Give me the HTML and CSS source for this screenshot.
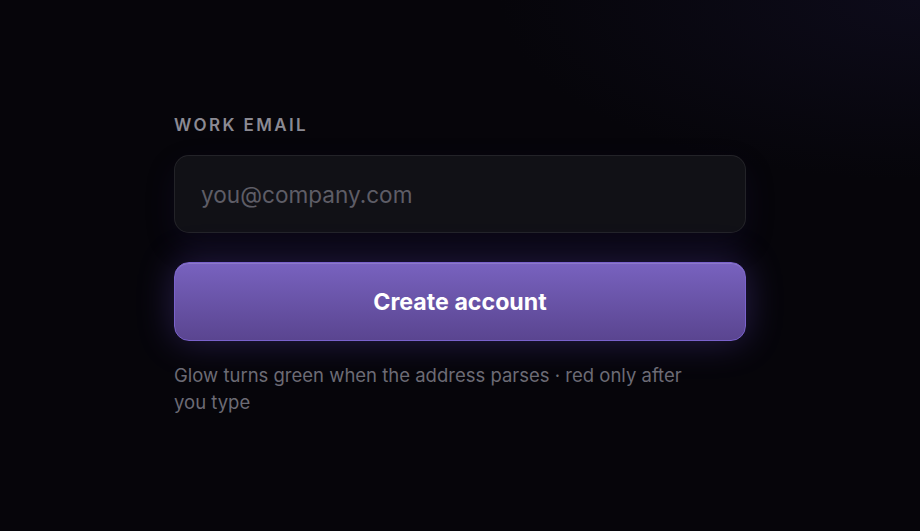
FILE: index.html
```html
<!DOCTYPE html>
<html lang="en">
<head>
    <meta charset="UTF-8">
    <meta name="viewport" content="width=device-width, initial-scale=1.0">
    <title>Sign up</title>
    <link rel="stylesheet" href="styles.css">
</head>
<body>
    <form class="signup">
        <label class="field-label" for="email">Work email</label>
        <input class="email-input" id="email" type="email" placeholder="you@company.com">
        <button class="submit" type="submit">Create account</button>
        <p class="hint">Glow turns green when the address parses · red only after you type</p>
    </form>
</body>
</html>
```

FILE: styles.css
```css
* {
    margin: 0;
    padding: 0;
    box-sizing: border-box;
    font-family: Inter, "Noto Sans", sans-serif;
}

body {
    min-height: 100vh;
    display: flex;
    justify-content: center;
    align-items: center;
    background: radial-gradient(ellipse 420px 180px at 100% 0%, #0d0b1a, transparent), #06050a;
}

.signup {
    width: 572px;
    display: flex;
    flex-direction: column;
}

.field-label {
    font-size: 17px;
    font-weight: 600;
    letter-spacing: 2.4px;
    text-transform: uppercase;
    color: #8b8a93;
    line-height: 20px;
    margin-bottom: 20px;
}

.email-input {
    height: 78px;
    padding: 0 26px;
    font-size: 22.6px;
    color: #e6e6ea;
    background: #111116;
    border: 1px solid rgba(255, 255, 255, 0.08);
    border-radius: 15px;
    outline: none;
    box-shadow: 0 12px 30px rgba(40, 30, 90, 0.18);
}

.email-input::placeholder {
    color: #5e5d66;
}

.submit {
    margin-top: 29px;
    height: 79px;
    font-size: 23.2px;
    font-weight: 650;
    color: #fff;
    border: 1.5px solid #7a62cc;
    border-radius: 15px;
    background: linear-gradient(180deg, #7862bf, #5a4590);
    box-shadow: 0 0 36px rgba(110, 80, 210, 0.32), inset 0 1px 0 rgba(255, 255, 255, 0.15);
    cursor: pointer;
}

.hint {
    margin-top: 21px;
    max-width: 530px;
    font-size: 18.5px;
    line-height: 27px;
    color: #6c6b75;
}
```
